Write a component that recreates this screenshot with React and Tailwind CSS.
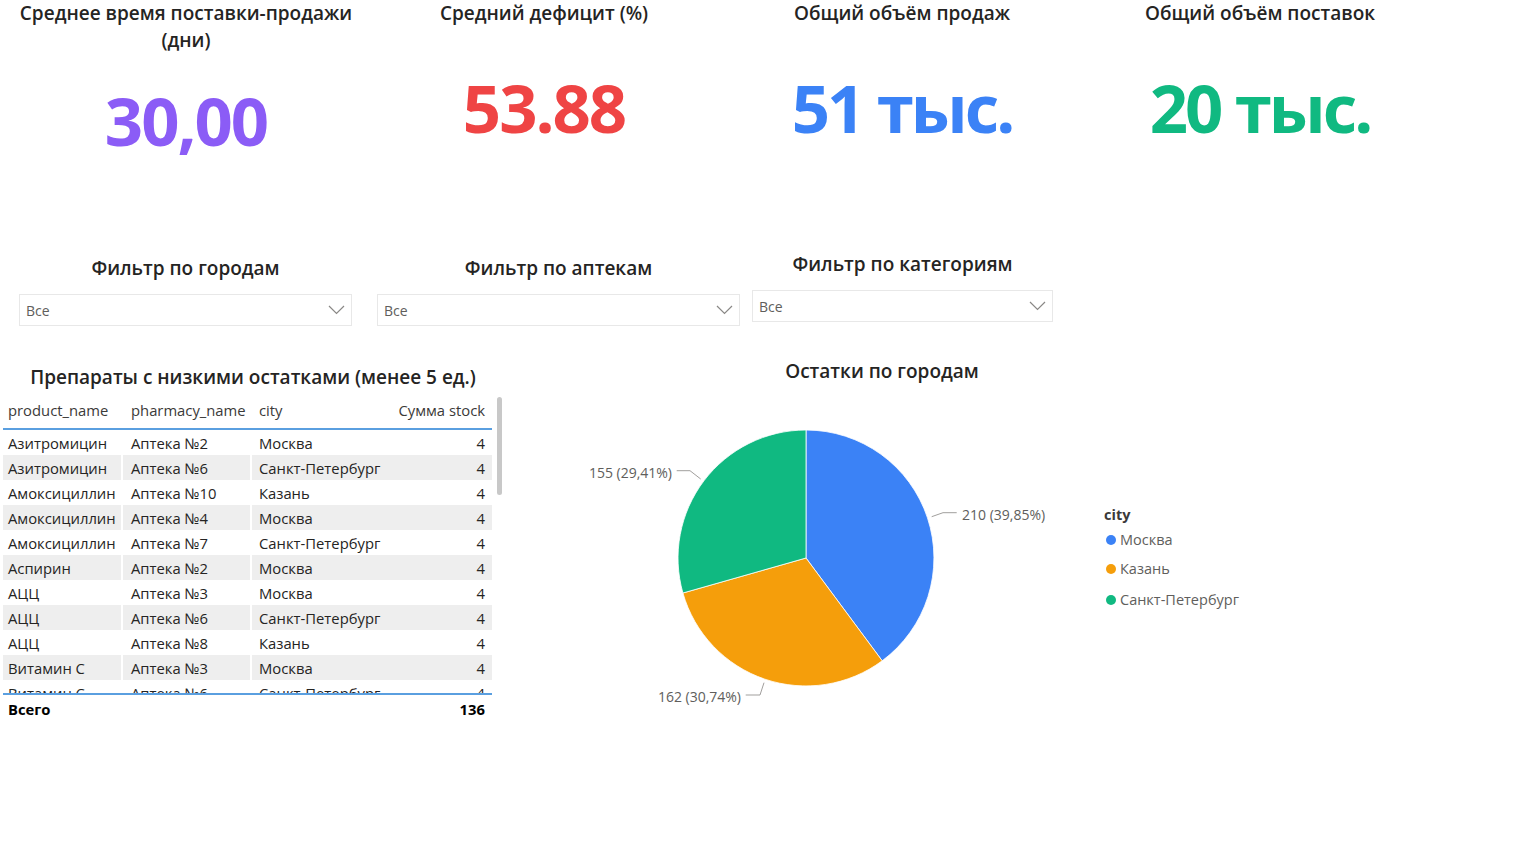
import React from 'react'

const rows = [
  ['Азитромицин', 'Аптека №2', 'Москва', 4],
  ['Азитромицин', 'Аптека №6', 'Санкт-Петербург', 4],
  ['Амоксициллин', 'Аптека №10', 'Казань', 4],
  ['Амоксициллин', 'Аптека №4', 'Москва', 4],
  ['Амоксициллин', 'Аптека №7', 'Санкт-Петербург', 4],
  ['Аспирин', 'Аптека №2', 'Москва', 4],
  ['АЦЦ', 'Аптека №3', 'Москва', 4],
  ['АЦЦ', 'Аптека №6', 'Санкт-Петербург', 4],
  ['АЦЦ', 'Аптека №8', 'Казань', 4],
  ['Витамин С', 'Аптека №3', 'Москва', 4],
  ['Витамин С', 'Аптека №6', 'Санкт-Петербург', 4],
]

function Chevron() {
  return (
    <svg width="17" height="10" viewBox="0 0 17 10" fill="none">
      <polyline points="1,1 8.5,8.5 16,1" stroke="#8a8886" strokeWidth="1.2" />
    </svg>
  )
}

function Dropdown({ width }) {
  return (
    <div className={`${width} h-[32px] border border-[#e8e8e8] flex items-center justify-between pl-[6px] pr-[6px] text-[14px] text-[#605e5c]`}>
      <span>Все</span>
      <Chevron />
    </div>
  )
}

function PieChart() {
  return (
    <svg width="540" height="340" viewBox="0 0 540 340" className="shrink-0">
      <path d="M246,175 L246,47 A128,128 0 0,1 322.2,277.8 Z" fill="#3b82f6" stroke="#fff" strokeWidth="0.8" />
      <path d="M246,175 L322.2,277.8 A128,128 0 0,1 122.9,210 Z" fill="#f59e0b" stroke="#fff" strokeWidth="0.8" />
      <path d="M246,175 L122.9,210 A128,128 0 0,1 246,47 Z" fill="#10b981" stroke="#fff" strokeWidth="0.8" />
      <g fill="none" stroke="#a19f9d" strokeWidth="1">
        <polyline points="371.7,133.7 383,129.7 396.7,129.7" />
        <polyline points="116.7,87.7 130,87.7 140.7,96" />
        <polyline points="185.7,312 200,312 204,299.7" />
      </g>
      <g fill="#605e5c" fontSize="14" fontFamily="'Open Sans', 'Noto Sans', sans-serif">
        <text x="402" y="131" dominantBaseline="central">210 (39,85%)</text>
        <text x="112" y="89" textAnchor="end" dominantBaseline="central">155 (29,41%)</text>
        <text x="181" y="313" textAnchor="end" dominantBaseline="central">162 (30,74%)</text>
      </g>
    </svg>
  )
}

export default function App() {
  return (
    <div className="w-[1515px] h-[852px] bg-white overflow-hidden font-['Open_Sans','Noto_Sans',sans-serif] text-[#252423]">
      {/* KPI cards */}
      <div className="flex pl-[7px] h-[252px]">
        <div className="w-[358px] flex flex-col items-center">
          <div className="text-[19px] font-semibold leading-[27px] text-center">
            Среднее время поставки-продажи
            <br />
            (дни)
          </div>
          <div className="mt-[30px] text-[67px] leading-[72px] font-bold tracking-[-2px] text-[#8b5cf6]">30,00</div>
        </div>
        <div className="w-[358px] flex flex-col items-center">
          <div className="text-[19px] font-semibold leading-[27px] text-center">Средний дефицит (%)</div>
          <div className="mt-[44px] text-[67px] leading-[72px] font-bold tracking-[-2px] text-[#ef4444]">53.88</div>
        </div>
        <div className="w-[358px] flex flex-col items-center">
          <div className="text-[19px] font-semibold leading-[27px] text-center">Общий объём продаж</div>
          <div className="mt-[44px] text-[67px] leading-[72px] font-bold tracking-[-3px] text-[#3b82f6]">51 тыс.</div>
        </div>
        <div className="w-[358px] flex flex-col items-center">
          <div className="text-[19px] font-semibold leading-[27px] text-center">Общий объём поставок</div>
          <div className="mt-[44px] text-[67px] leading-[72px] font-bold tracking-[-3px] text-[#10b981]">20 тыс.</div>
        </div>
      </div>

      {/* Filters */}
      <div className="flex items-start">
        <div className="ml-[19px] pt-[4px] flex flex-col">
          <div className="text-[19px] font-semibold leading-[24px] text-center">Фильтр по городам</div>
          <div className="mt-[14px]">
            <Dropdown width="w-[333px]" />
          </div>
        </div>
        <div className="ml-[25px] pt-[4px] flex flex-col">
          <div className="text-[19px] font-semibold leading-[24px] text-center">Фильтр по аптекам</div>
          <div className="mt-[14px]">
            <Dropdown width="w-[363px]" />
          </div>
        </div>
        <div className="ml-[12px] flex flex-col">
          <div className="text-[19px] font-semibold leading-[24px] text-center">Фильтр по категориям</div>
          <div className="mt-[14px]">
            <Dropdown width="w-[301px]" />
          </div>
        </div>
      </div>

      {/* Table + chart */}
      <div className="flex items-start mt-[33px]">
        <div className="ml-[3px] pt-[6px] w-[499px] shrink-0">
          <div className="w-[500px] text-[19px] font-semibold leading-[24px] text-center whitespace-nowrap">
            Препараты с низкими остатками (менее 5 ед.)
          </div>
          <div className="flex items-start mt-[8px]">
            <div className="w-[489px] text-[14.8px] text-[#252423]">
              <div className="flex h-[33px] pt-[3px] leading-[20px] text-[#3b3a39] border-b-2 border-[#5a9fe0]">
                <div className="w-[120px] pl-[5px]">product_name</div>
                <div className="w-[129px] pl-[8px]">pharmacy_name</div>
                <div className="flex-1 pl-[7px]">city</div>
                <div className="pr-[7px]">Сумма stock</div>
              </div>
              <div className="h-[263px] overflow-hidden">
                {rows.map((r, i) => (
                  <div
                    key={i}
                    className={`flex h-[25px] items-center leading-[20px] ${i % 2 === 1 ? 'bg-[#eeeeee]' : 'bg-white'}`}
                  >
                    <div className="w-[120px] h-full flex items-center pl-[5px] border-r-2 border-white whitespace-nowrap">{r[0]}</div>
                    <div className="w-[129px] h-full flex items-center pl-[8px] border-r-2 border-white whitespace-nowrap">{r[1]}</div>
                    <div className="flex-1 h-full flex items-center pl-[7px] whitespace-nowrap">{r[2]}</div>
                    <div className="pr-[7px]">{r[3]}</div>
                  </div>
                ))}
              </div>
              <div className="flex h-[30px] items-center justify-between border-t-2 border-[#5a9fe0] font-bold text-[#000]">
                <div className="pl-[5px]">Всего</div>
                <div className="pr-[7px]">136</div>
              </div>
            </div>
            <div className="ml-[5px] w-[5px] h-[98px] rounded-full bg-[#c8c8c8]" />
          </div>
        </div>

        <div className="ml-[58px] shrink-0">
          <div className="w-[644px] text-[19px] font-semibold leading-[24px] text-center">Остатки по городам</div>
          <div className="flex items-start">
            <PieChart />
            <div className="pl-[4px] pt-[122px] text-[14.5px] leading-[20px] whitespace-nowrap">
              <div className="font-bold text-[#3b3a39]">city</div>
              <div className="mt-[5px] flex items-center gap-[4px] ml-[2px] text-[#605e5c]">
                <span className="w-[10px] h-[10px] rounded-full bg-[#3b82f6]" />
                Москва
              </div>
              <div className="mt-[9px] flex items-center gap-[4px] ml-[2px] text-[#605e5c]">
                <span className="w-[10px] h-[10px] rounded-full bg-[#f59e0b]" />
                Казань
              </div>
              <div className="mt-[11px] flex items-center gap-[4px] ml-[2px] text-[#605e5c]">
                <span className="w-[10px] h-[10px] rounded-full bg-[#10b981]" />
                Санкт-Петербург
              </div>
            </div>
          </div>
        </div>
      </div>
    </div>
  )
}
